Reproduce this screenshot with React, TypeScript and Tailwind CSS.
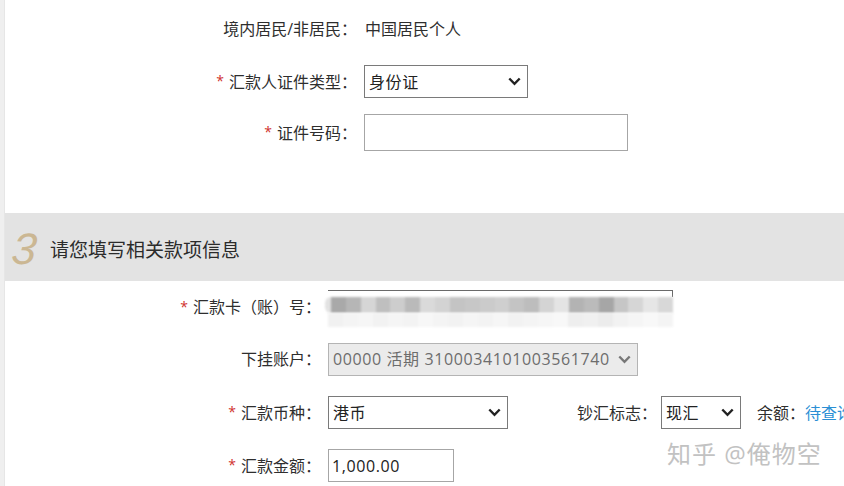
import React from 'react';

const cardBlocks = [
  '#a9a9a9', '#b6b6b6', '#d6d6d6', '#bfbfbf', '#cdcdcd', '#bababa', '#dadada', '#d3d3d3',
  '#c4c4c4', '#c7c7c7', '#cbcbcb', '#cfcfcf', '#c4c4c4', '#bdbdbd', '#d4d4d4', '#e4e4e4',
  '#b3b3b3', '#bbbbbb', '#a6a6a6', '#c6c6c6', '#d6d6d6', '#e6e6e6', '#d8d8d8',
];

const cardBlocksLow = [
  '#f1f1f1', '#f4f4f4', '#f6f6f6', '#f2f2f2', '#f5f5f5', '#f3f3f3', '#f7f7f7', '#f4f4f4',
  '#f2f2f2', '#f5f5f5', '#f3f3f3', '#f6f6f6', '#f2f2f2', '#f4f4f4', '#f6f6f6', '#f8f8f8',
  '#eeeeee', '#f0f0f0', '#ececec', '#f2f2f2', '#f5f5f5', '#f8f8f8', '#f4f4f4',
];

function Chevron({ color = '#222' }: { color?: string }) {
  return (
    <svg width="13" height="9" viewBox="0 0 13 9" className="shrink-0">
      <polyline points="1.3,1.5 6.5,6.8 11.7,1.5" fill="none" stroke={color} strokeWidth="2.4" />
    </svg>
  );
}

function Select({ value, width, disabled }: { value: string; width: string; disabled?: boolean }) {
  return (
    <div
      className={`${width} shrink-0 h-[33px] flex items-center justify-between pl-[4px] pr-[6px] border ${
        disabled ? 'border-[#b4b4b4] bg-[#ebebeb] text-[#6d6d6d]' : 'border-[#7a7a7a] bg-white text-[#222]'
      }`}
    >
      <span className="whitespace-nowrap tracking-[0.6px]">{value}</span>
      <Chevron color={disabled ? '#777' : '#222'} />
    </div>
  );
}

function Label({ text, required, width }: { text: string; required?: boolean; width: string }) {
  return (
    <div className={`${width} shrink-0 flex justify-end items-center pr-[7px] whitespace-nowrap`}>
      {required && <span className="text-[#d0312d] text-[14px] mr-[5px] relative top-[-1px]">*</span>}
      <span>{text}</span>
    </div>
  );
}

export default function App() {
  return (
    <div className="relative w-[844px] h-[486px] overflow-hidden bg-white flex font-['Open_Sans','Noto_Sans_CJK_SC',sans-serif] text-[16px] text-[#2e2e2e]">
      {/* left edge */}
      <div className="w-[5px] shrink-0 bg-[#efefef] border-r border-[#e6e6e6]" />

      <div className="flex-1 flex flex-col min-w-0">
        {/* personal info */}
        <div className="h-[58px] shrink-0 flex items-center">
          <Label text="境内居民/非居民：" width="w-[359px]" />
          <span className="pl-[1px]">中国居民个人</span>
        </div>
        <div className="h-[47px] shrink-0 flex items-center">
          <Label text="汇款人证件类型：" required width="w-[359px]" />
          <Select value="身份证" width="w-[164px]" />
        </div>
        <div className="h-[55px] shrink-0 flex items-center">
          <Label text="证件号码：" required width="w-[359px]" />
          <div className="w-[264px] h-[37px] border border-[#a6a6a6] bg-white" />
        </div>

        <div className="h-[53px] shrink-0" />

        {/* section header */}
        <div className="h-[68px] shrink-0 bg-[#e3e3e3] flex items-center">
          <span className="w-[45px] pl-[7px] italic text-[44px] leading-none text-[#cbb793] font-['Liberation_Sans',sans-serif] relative top-[2px] -skew-x-6">
            3
          </span>
          <span className="text-[19px] text-[#2b2b2b] relative top-[3px]">请您填写相关款项信息</span>
        </div>

        {/* account info */}
        <div className="h-[52px] shrink-0 flex items-center">
          <Label text="汇款卡（账）号：" required width="w-[323px]" />
          <div className="relative w-[345px] h-[40px] self-end mb-[3px]">
            <div className="h-[7px] border-t border-r border-[#6a6a6a]" />
            <div className="flex blur-[1px] -ml-[3px]">
              <div className="w-[6px] h-[16px] rounded-l-full bg-[#e2e2e2]" />
              {cardBlocks.map((c, i) => (
                <div key={i} className="w-[15px] h-[16px]" style={{ backgroundColor: c }} />
              ))}
            </div>
            <div className="flex blur-[1px]">
              {cardBlocksLow.map((c, i) => (
                <div key={i} className="w-[15px] h-[14px]" style={{ backgroundColor: c }} />
              ))}
            </div>
          </div>
        </div>
        <div className="h-[52px] shrink-0 flex items-center">
          <Label text="下挂账户：" width="w-[323px]" />
          <Select value="00000 活期 3100034101003561740" width="w-[310px]" disabled />
        </div>
        <div className="h-[55px] shrink-0 flex items-center">
          <Label text="汇款币种：" required width="w-[323px]" />
          <Select value="港币" width="w-[180px]" />
          <span className="ml-[69px] shrink-0 whitespace-nowrap">钞汇标志：</span>
          <div className="ml-[4px] shrink-0">
            <Select value="现汇" width="w-[80px]" />
          </div>
          <span className="ml-[16px] shrink-0 whitespace-nowrap">余额：</span>
          <span className="shrink-0 whitespace-nowrap text-[#2b8fd4]">待查询</span>
        </div>
        <div className="h-[51px] shrink-0 flex items-center">
          <Label text="汇款金额：" required width="w-[323px]" />
          <div className="w-[126px] h-[33px] border border-[#a6a6a6] bg-white flex items-center pl-[3px] text-[#222] tracking-[0.6px]">
            1,000.00
          </div>
        </div>
      </div>

      {/* watermark */}
      <div className="absolute left-[667px] top-[436px] text-[24px] text-[#c2c2c2] whitespace-nowrap tracking-[1px] [text-shadow:0_0_2px_#fff]">
        知乎 @俺物空
      </div>
    </div>
  );
}
